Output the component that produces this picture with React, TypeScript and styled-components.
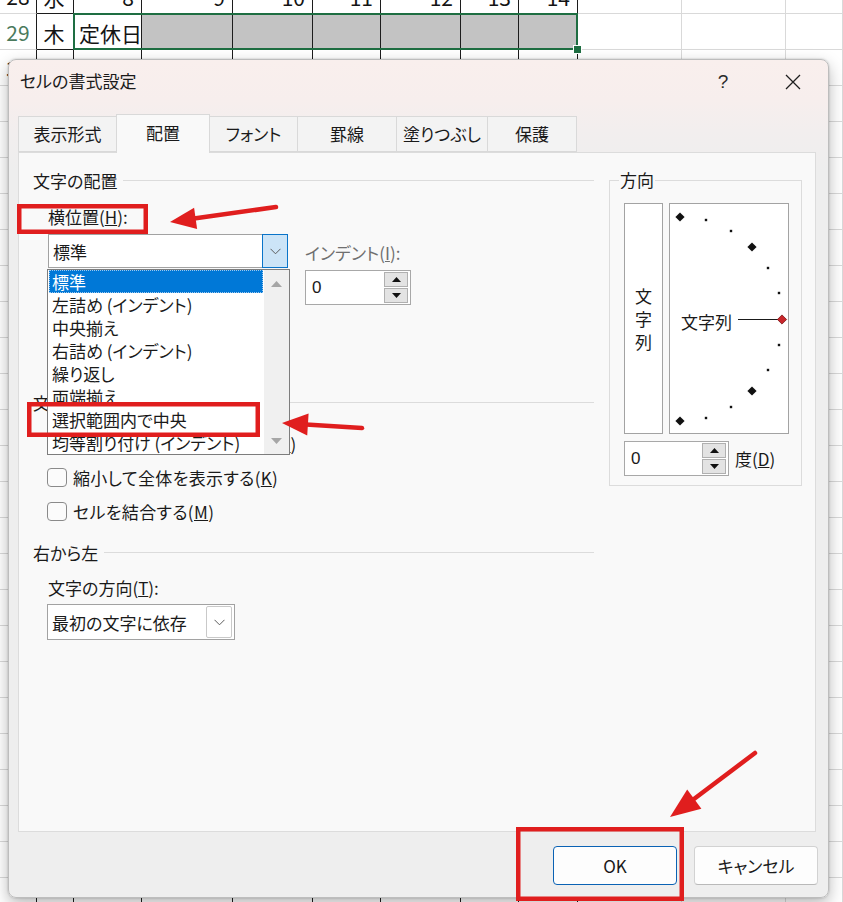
import React from "react";
import styled, { createGlobalStyle } from "styled-components";

const FONT = `"Noto Sans CJK JP", "Noto Sans", "DejaVu Sans", sans-serif`;

const GlobalStyle = createGlobalStyle`
  * { box-sizing: border-box; }
  html, body { margin: 0; padding: 0; background: #ffffff; }
  body { font-family: ${FONT}; overflow: hidden; }
`;

const Page = styled.div`
  position: relative;
  width: 843px;
  height: 902px;
  overflow: hidden;
  background: #ffffff;
`;

/* ---------------- spreadsheet behind the dialog ---------------- */

const COLS = [37, 37, 68, 91, 80, 68, 80, 58, 59, 104, 104, 57];

const Sheet = styled.div`
  margin-top: -22px;
  display: flex;
  flex-direction: column;
  font-family: ${FONT};
  font-size: 21px;
  color: #141414;
`;

const SheetRow = styled.div`
  display: flex;
  flex: none;
  height: 36px;
`;

type Kind = "header" | "table" | "grid";

const Cell = styled.div<{
  $w: number;
  $kind: Kind;
  $align: "left" | "center" | "right";
  $fill?: boolean;
  $current?: boolean;
}>`
  flex: none;
  width: ${(p) => p.$w}px;
  height: 36px;
  display: flex;
  align-items: ${(p) => (p.$kind === "header" ? "center" : "flex-end")};
  justify-content: ${(p) =>
    p.$align === "left" ? "flex-start" : p.$align === "right" ? "flex-end" : "center"};
  padding: ${(p) => (p.$kind === "header" ? "0" : "0 7px 3px 5px")};
  line-height: 26px;
  white-space: nowrap;
  overflow: hidden;
  border-right: 1px solid ${(p) => (p.$kind === "grid" ? "#d9d9d9" : "#1c1c1c")};
  border-bottom: 1px solid ${(p) => (p.$kind === "table" ? "#1c1c1c" : "#d9d9d9")};
  background: ${(p) => (p.$fill ? "#c3c3c3" : "#ffffff")};
  color: ${(p) => (p.$current ? "#4b7a5d" : "#141414")};
`;

const SelectedRange = styled.div`
  display: flex;
  position: relative;
  z-index: 1;
  &::after {
    content: "";
    position: absolute;
    inset: -1px 0 0 -1px;
    border: 2px solid #1e6e42;
    pointer-events: none;
  }
  &::before {
    content: "";
    position: absolute;
    right: -4px;
    bottom: -4px;
    width: 7px;
    height: 7px;
    background: #1e6e42;
    border: 1px solid #ffffff;
    z-index: 2;
  }
`;

const ROW_DATA: Record<number, string[]> = {
  28: ["水", "8", "9", "10", "11", "12", "13", "14"],
  29: ["木", "定休日"],
  30: ["金"],
};

const SHEET_ROWS = Array.from({ length: 26 }, (_, i) => 28 + i);

function SheetCells({ row, from, to }: { row: number; from: number; to: number }) {
  const cells = [];
  for (let c = from; c <= to; c++) {
    const kind: Kind = c === 0 ? "header" : c <= 8 ? "table" : "grid";
    const text =
      c === 0 ? (row <= 30 ? String(row) : "") : ROW_DATA[row]?.[c - 1] ?? "";
    const align = c <= 1 ? "center" : row === 29 && c === 2 ? "left" : "right";
    cells.push(
      <Cell
        key={c}
        $w={COLS[c]}
        $kind={kind}
        $align={align}
        $fill={row === 29 && c >= 3 && c <= 8}
        $current={row === 29 && c === 0}
      >
        {text}
      </Cell>
    );
  }
  return <>{cells}</>;
}

function Spreadsheet() {
  return (
    <Sheet>
      {SHEET_ROWS.map((r) =>
        r === 29 ? (
          <SheetRow key={r}>
            <SheetCells row={r} from={0} to={1} />
            <SelectedRange>
              <SheetCells row={r} from={2} to={8} />
            </SelectedRange>
            <SheetCells row={r} from={9} to={11} />
          </SheetRow>
        ) : (
          <SheetRow key={r}>
            <SheetCells row={r} from={0} to={11} />
          </SheetRow>
        )
      )}
    </Sheet>
  );
}

/* ---------------- dialog ---------------- */

const Dialog = styled.div`
  position: absolute;
  left: 8px;
  top: 59px;
  width: 821px;
  height: 839px;
  z-index: 2;
  display: flex;
  flex-direction: column;
  border: 1px solid #bdbdbd;
  border-radius: 8px;
  background: linear-gradient(
    180deg,
    #f9efed 0px,
    #f7eeed 40px,
    #f2eeee 70px,
    #eeeeee 110px,
    #eeeeee 100%
  );
  box-shadow: 0 0 2px rgba(0, 0, 0, 0.25), 0 6px 16px rgba(0, 0, 0, 0.28);
  overflow: hidden;
  font-family: ${FONT};
  font-size: 17px;
  color: #1a1a1a;
  font-feature-settings: "palt" 1;
`;

const TitleBar = styled.div`
  flex: none;
  height: 43px;
  display: flex;
  align-items: center;
  padding-left: 11px;
`;

const Title = styled.div`
  flex: 1;
  font-size: 17px;
  line-height: 20px;
  margin-top: -1px;
`;

const TitleButton = styled.div`
  width: 70px;
  height: 43px;
  display: flex;
  align-items: center;
  justify-content: center;
  font-family: "Liberation Sans", sans-serif;
  font-size: 19px;
  color: #2a2a2a;
`;

const Body = styled.div`
  flex: 1;
  min-height: 0;
  display: flex;
  flex-direction: column;
  padding: 11px 12px 0 9px;
`;

const TabStrip = styled.div`
  flex: none;
  height: 38px;
  display: flex;
  align-items: flex-end;
  position: relative;
  z-index: 1;
`;

const Tab = styled.div<{ $w: number; $active?: boolean }>`
  flex: none;
  width: ${(p) => p.$w}px;
  height: ${(p) => (p.$active ? 39 : 36)}px;
  margin-right: -1px;
  margin-bottom: ${(p) => (p.$active ? -1 : 0)}px;
  display: flex;
  align-items: center;
  justify-content: center;
  padding-bottom: ${(p) => (p.$active ? 2 : 0)}px;
  border: 1px solid #d9d9d9;
  border-bottom: ${(p) => (p.$active ? "none" : "1px solid #d9d9d9")};
  background: ${(p) => (p.$active ? "#f9f9f9" : "#f3f3f3")};
  position: relative;
  z-index: ${(p) => (p.$active ? 2 : 1)};
  line-height: 20px;
`;

const Panel = styled.div`
  flex: 1;
  min-height: 0;
  display: flex;
  gap: 15px;
  padding: 18px 13px 0 14px;
  background: #f9f9f9;
  border: 1px solid #dcdcdc;
`;

const LeftCol = styled.div`
  flex: none;
  width: 561px;
  display: flex;
  flex-direction: column;
`;

const GroupHeader = styled.div<{ $mt?: number }>`
  flex: none;
  height: 20px;
  line-height: 20px;
  margin-top: ${(p) => p.$mt ?? 0}px;
  display: flex;
  align-items: center;
  gap: 6px;
  white-space: nowrap;
  &::after {
    content: "";
    flex: 1;
    height: 1px;
    margin-top: -1px;
    background: #dcdcdc;
  }
`;

const FieldLabel = styled.div<{ $mt?: number; $muted?: boolean; $pl?: number }>`
  height: 20px;
  line-height: 20px;
  margin-top: ${(p) => p.$mt ?? 0}px;
  padding-left: ${(p) => p.$pl ?? 15}px;
  white-space: nowrap;
  color: ${(p) => (p.$muted ? "#6f6f6f" : "#1a1a1a")};
`;

const ComboRow = styled.div`
  display: flex;
  gap: 17px;
  padding-left: 15px;
  margin-top: 7px;
`;

const ComboWrap = styled.div<{ $mt?: number; $pl?: number }>`
  position: relative;
  align-self: flex-start;
  margin-top: ${(p) => p.$mt ?? 0}px;
  margin-left: ${(p) => p.$pl ?? 0}px;
`;

const Combo = styled.div<{ $w: number; $h: number }>`
  width: ${(p) => p.$w}px;
  height: ${(p) => p.$h}px;
  display: flex;
  align-items: stretch;
  background: #ffffff;
  border: 1px solid #a2a2a2;
`;

const ComboValue = styled.div`
  flex: 1;
  display: flex;
  align-items: center;
  padding-left: 4px;
  white-space: nowrap;
`;

const DropButton = styled.div<{ $open?: boolean }>`
  flex: none;
  width: 26px;
  display: flex;
  align-items: center;
  justify-content: center;
  margin: ${(p) => (p.$open ? "-1px -1px -1px 0" : "1px 2px 1px 0")};
  background: ${(p) => (p.$open ? "#cce4f7" : "#ffffff")};
  border: 1px solid ${(p) => (p.$open ? "#0a74c9" : "#c9c9c9")};
  border-radius: ${(p) => (p.$open ? "0" : "2px")};
`;

const DropList = styled.div`
  position: absolute;
  top: calc(100% + 1px);
  left: -1px;
  width: 243px;
  height: 186px;
  z-index: 5;
  display: flex;
  background: #ffffff;
  border: 1px solid #7d7d7d;
  overflow: hidden;
`;

const ListItems = styled.div`
  flex: 1;
  padding: 0 1px 1px;
  display: flex;
  flex-direction: column;
`;

const ListItem = styled.div<{ $selected?: boolean }>`
  flex: none;
  height: 23px;
  line-height: 21px;
  padding-left: 2px;
  white-space: nowrap;
  background: ${(p) => (p.$selected ? "#0078d7" : "transparent")};
  color: ${(p) => (p.$selected ? "#ffffff" : "#1a1a1a")};
  border: 1px dotted ${(p) => (p.$selected ? "#9cc8ee" : "transparent")};
`;

const ScrollTrack = styled.div`
  flex: none;
  width: 25px;
  background: #f0f0f0;
  display: flex;
  flex-direction: column;
  align-items: center;
  justify-content: space-between;
  padding: 11px 0 10px;
`;

const IndentCol = styled.div`
  display: flex;
  flex-direction: column;
  gap: 7px;
  margin-top: 9px;
`;

const SpinBox = styled.div<{ $w: number }>`
  width: ${(p) => p.$w}px;
  height: 35px;
  display: flex;
  align-items: center;
  padding-left: 6px;
  background: #ffffff;
  border: 1px solid #a8a8a8;
`;

const SpinValue = styled.div`
  flex: 1;
  font-family: "Liberation Sans", ${FONT};
  font-size: 17px;
`;

const SpinButtons = styled.div`
  flex: none;
  width: 24px;
  margin-right: 2px;
  display: flex;
  flex-direction: column;
  gap: 1px;
`;

const SpinHalf = styled.div`
  height: 15px;
  display: flex;
  align-items: center;
  justify-content: center;
  background: #e3e3e3;
  border: 1px solid #b0b0b0;
`;

const CheckRow = styled.label<{ $mt?: number }>`
  height: 34px;
  display: flex;
  align-items: center;
  gap: 6px;
  padding-left: 14px;
  margin-top: ${(p) => p.$mt ?? 0}px;
  white-space: nowrap;
  letter-spacing: 0.35px;
`;

const CheckBox = styled.span`
  flex: none;
  width: 20px;
  height: 19px;
  border: 1px solid #8a8a8a;
  border-radius: 4px;
  background: #fbfbfb;
`;

/* direction group */

const DirGroup = styled.fieldset`
  flex: none;
  align-self: flex-start;
  width: 193px;
  margin: 0;
  padding: 14px 12px 9px 14px;
  border: 1px solid #dcdcdc;
  min-inline-size: 0;
`;

const Legend = styled.legend`
  padding: 0 1px;
  margin-left: -5px;
  line-height: 18px;
  font-size: 17px;
`;

const DirRow = styled.div`
  display: flex;
  gap: 6px;
`;

const VerticalText = styled.div`
  width: 39px;
  height: 231px;
  display: flex;
  flex-direction: column;
  align-items: center;
  justify-content: center;
  padding-top: 0;
  background: #ffffff;
  border: 1px solid #a3a3a3;
  line-height: 23px;
`;

const Dial = styled.div`
  width: 120px;
  height: 231px;
  background: #ffffff;
  border: 1px solid #a3a3a3;
  svg {
    display: block;
  }
`;

const DegreeRow = styled.div`
  display: flex;
  align-items: center;
  gap: 6px;
  margin-top: 7px;
`;

/* footer */

const Footer = styled.div`
  flex: none;
  height: 65px;
  display: flex;
  justify-content: flex-end;
  align-items: flex-start;
  gap: 17px;
  padding: 14px 10px 0 0;
`;

const Button = styled.div<{ $primary?: boolean }>`
  width: 124px;
  height: 39px;
  display: flex;
  align-items: center;
  justify-content: center;
  border-radius: 4px;
  background: #fdfdfd;
  border: 1px solid ${(p) => (p.$primary ? "#0a62b4" : "#d2d2d2")};
  border-bottom-color: ${(p) => (p.$primary ? "#0a62b4" : "#b9b9b9")};
  font-size: 17px;
`;

/* annotations */

const Overlay = styled.svg`
  position: absolute;
  left: 0;
  top: 0;
  width: 843px;
  height: 902px;
  z-index: 10;
  pointer-events: none;
`;

/* ---------------- small drawings ---------------- */

const Chevron = () => (
  <svg width="11" height="7" viewBox="0 0 11 7">
    <path d="M0.5 0.8 L5.5 5.8 L10.5 0.8" fill="none" stroke="#5c5c5c" strokeWidth="1" />
  </svg>
);

const Tri = ({ up, color, w = 9, h = 5 }: { up?: boolean; color: string; w?: number; h?: number }) => (
  <svg width={w} height={h} viewBox={`0 0 ${w} ${h}`}>
    <path
      d={up ? `M0 ${h} L${w / 2} 0 L${w} ${h} Z` : `M0 0 L${w / 2} ${h} L${w} 0 Z`}
      fill={color}
    />
  </svg>
);

const CloseIcon = () => (
  <svg width="16" height="16" viewBox="0 0 16 16">
    <path d="M1 1 L15 15 M15 1 L1 15" stroke="#1f1f1f" strokeWidth="1.3" fill="none" />
  </svg>
);

function Spin({ w }: { w: number }) {
  return (
    <SpinBox $w={w}>
      <SpinValue>0</SpinValue>
      <SpinButtons>
        <SpinHalf>
          <Tri up color="#111" />
        </SpinHalf>
        <SpinHalf>
          <Tri color="#111" />
        </SpinHalf>
      </SpinButtons>
    </SpinBox>
  );
}

function Diamond({ x, y, color = "#111" }: { x: number; y: number; color?: string }) {
  const r = 4.6;
  return (
    <path
      d={`M${x} ${y - r} L${x + r} ${y} L${x} ${y + r} L${x - r} ${y} Z`}
      fill={color}
      stroke={color === "#111" ? "none" : "#7a1010"}
      strokeWidth="0.8"
    />
  );
}

const DOTS: [number, number][] = [
  [36, 16],
  [61, 27],
  [98, 64],
  [109, 89],
  [109, 141],
  [98, 166],
  [61, 203],
  [36, 214],
];

function OrientationDial() {
  return (
    <Dial>
      <svg width="118" height="229" viewBox="0 0 118 229">
        <Diamond x={10} y={13} />
        <Diamond x={82} y={43} />
        <Diamond x={82} y={187} />
        <Diamond x={10} y={217} />
        {DOTS.map(([x, y]) => (
          <rect key={`${x}-${y}`} x={x - 1.2} y={y - 1.2} width="2.4" height="2.4" fill="#111" />
        ))}
        <text x="11" y="125" fontFamily={FONT} fontSize="17" fill="#1a1a1a">
          文字列
        </text>
        <line x1="68" y1="115.5" x2="108" y2="115.5" stroke="#1a1a1a" strokeWidth="1" />
        <Diamond x={112} y={115.5} color="#c8262b" />
      </svg>
    </Dial>
  );
}

/* ---------------- data ---------------- */

const TABS = [
  { label: "表示形式", w: 99 },
  { label: "配置", w: 94, active: true },
  { label: "フォント", w: 89 },
  { label: "罫線", w: 100 },
  { label: "塗りつぶし", w: 92 },
  { label: "保護", w: 90 },
];

const H_ALIGN_ITEMS = [
  "標準",
  "左詰め (インデント)",
  "中央揃え",
  "右詰め (インデント)",
  "繰り返し",
  "両端揃え",
  "選択範囲内で中央",
  "均等割り付け (インデント)",
];

const CHECKS = [
  { text: "折り返して全体を表示する", key: "W" },
  { text: "縮小して全体を表示する", key: "K" },
  { text: "セルを結合する", key: "M" },
];

/* ---------------- app ---------------- */

export default function App() {
  return (
    <Page>
      <GlobalStyle />
      <Spreadsheet />

      <Dialog>
        <TitleBar>
          <Title>セルの書式設定</Title>
          <TitleButton>?</TitleButton>
          <TitleButton>
            <CloseIcon />
          </TitleButton>
        </TitleBar>

        <Body>
          <TabStrip>
            {TABS.map((t) => (
              <Tab key={t.label} $w={t.w} $active={t.active}>
                {t.label}
              </Tab>
            ))}
          </TabStrip>

          <Panel>
            <LeftCol>
              <GroupHeader>文字の配置</GroupHeader>
              <FieldLabel $mt={16}>
                横位置(<u>H</u>):
              </FieldLabel>

              <ComboRow>
                <ComboWrap>
                  <Combo $w={240} $h={34}>
                    <ComboValue>標準</ComboValue>
                    <DropButton $open>
                      <Chevron />
                    </DropButton>
                  </Combo>
                  <DropList>
                    <ListItems>
                      {H_ALIGN_ITEMS.map((it, i) => (
                        <ListItem key={it} $selected={i === 0}>
                          {it}
                        </ListItem>
                      ))}
                    </ListItems>
                    <ScrollTrack>
                      <Tri up color="#a6a6a6" w={11} h={6} />
                      <Tri color="#a6a6a6" w={11} h={6} />
                    </ScrollTrack>
                  </DropList>
                </ComboWrap>

                <IndentCol>
                  <FieldLabel $muted $pl={0}>
                    インデント(<u>I</u>):
                  </FieldLabel>
                  <Spin w={106} />
                </IndentCol>
              </ComboRow>

              <GroupHeader $mt={88}>文字の制御</GroupHeader>
              {CHECKS.map((c, i) => (
                <CheckRow key={c.key} $mt={i === 0 ? 13 : 0}>
                  <CheckBox />
                  <span>
                    {c.text}(<u>{c.key}</u>)
                  </span>
                </CheckRow>
              ))}

              <GroupHeader $mt={15}>右から左</GroupHeader>
              <FieldLabel $mt={15}>
                文字の方向(<u>T</u>):
              </FieldLabel>
              <ComboWrap $mt={6} $pl={14}>
                <Combo $w={188} $h={36}>
                  <ComboValue>最初の文字に依存</ComboValue>
                  <DropButton>
                    <Chevron />
                  </DropButton>
                </Combo>
              </ComboWrap>
            </LeftCol>

            <DirGroup>
              <Legend>方向</Legend>
              <DirRow>
                <VerticalText>
                  <span>文</span>
                  <span>字</span>
                  <span>列</span>
                </VerticalText>
                <OrientationDial />
              </DirRow>
              <DegreeRow>
                <Spin w={105} />
                <span>
                  度(<u>D</u>)
                </span>
              </DegreeRow>
            </DirGroup>
          </Panel>
        </Body>

        <Footer>
          <Button $primary>OK</Button>
          <Button>キャンセル</Button>
        </Footer>
      </Dialog>

      <Overlay viewBox="0 0 843 902">
        <g fill="none" stroke="#e01e1e" strokeWidth="4.5">
          <rect x="19.25" y="206.25" width="126.5" height="25.5" />
          <rect x="29.25" y="404.25" width="228.5" height="30.5" />
          <rect x="518.25" y="829.25" width="163.5" height="69.5" />
          <line x1="276" y1="207" x2="194" y2="218.6" strokeLinecap="round" />
          <line x1="362" y1="428" x2="306" y2="424.5" strokeLinecap="round" />
          <line x1="755" y1="753" x2="692" y2="800.5" strokeLinecap="round" />
        </g>
        <g fill="#e01e1e">
          <polygon points="170,222 197.1,229 194.1,207.8" />
          <polygon points="282,423 308.6,413.6 307.2,435.6" />
          <polygon points="670,817 701.4,808.8 687.2,789.6" />
        </g>
      </Overlay>
    </Page>
  );
}
